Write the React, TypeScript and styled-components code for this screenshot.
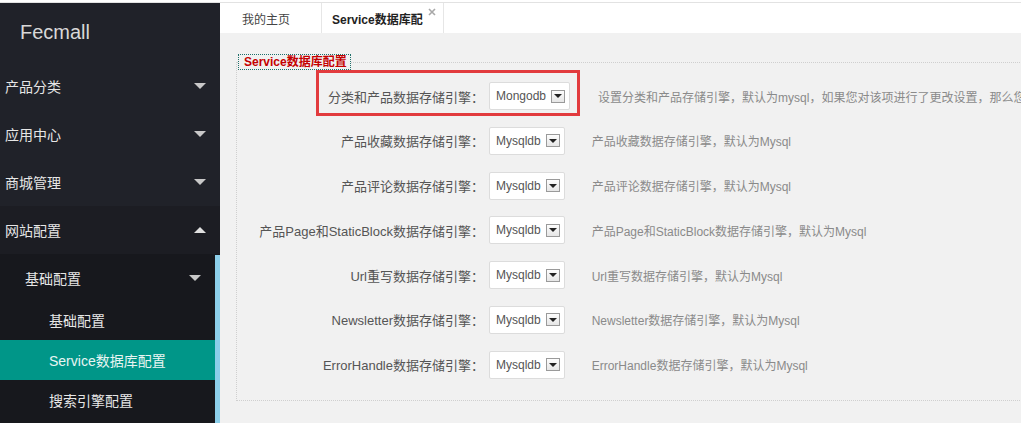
import React from "react";
import styled, { createGlobalStyle } from "styled-components";

const Global = createGlobalStyle`
  html, body { margin: 0; padding: 0; background: #fff; }
  body { font-family: "Liberation Sans", "Noto Sans CJK SC", sans-serif; overflow: hidden; }
  * { box-sizing: border-box; }
`;

const Page = styled.div`
  width: 1021px;
  height: 423px;
  padding-top: 2px;
  overflow: hidden;
`;

const Frame = styled.div`
  display: flex;
  height: 421px;
  border-top: 1px solid #e2e2e2;
`;

const Sidebar = styled.aside`
  position: relative;
  width: 220px;
  flex: none;
  background: #202229;
  display: flex;
  flex-direction: column;
`;

const Logo = styled.div`
  height: 59px;
  padding-left: 20px;
  display: flex;
  align-items: center;
  font-size: 20px;
  color: #d8d8d8;
`;

const NavItem = styled.div<{ $bg?: string }>`
  height: 48px;
  display: flex;
  align-items: center;
  justify-content: space-between;
  padding: 0 14px 0 5px;
  font-size: 14px;
  color: #e6e6e6;
  background: ${(p) => p.$bg || "transparent"};
`;

const SubArea = styled.div`
  flex: 1;
  background: #17181d;
  padding-right: 5px;
`;

const SubHeader = styled.div`
  height: 46px;
  display: flex;
  align-items: center;
  justify-content: space-between;
  padding: 2px 14px 0 25px;
  font-size: 14px;
  color: #e6e6e6;
`;

const SubItem = styled.div<{ $active?: boolean }>`
  height: 40px;
  display: flex;
  align-items: center;
  padding-left: 49px;
  font-size: 14px;
  color: ${(p) => (p.$active ? "#e8f5f3" : "#e6e6e6")};
  background: ${(p) => (p.$active ? "#009688" : "transparent")};
`;

const Caret = styled.span<{ $up?: boolean }>`
  width: 0;
  height: 0;
  border-left: 6px solid transparent;
  border-right: 6px solid transparent;
  ${(p) =>
    p.$up
      ? "border-bottom: 6px solid #e0e0e0;"
      : "border-top: 6px solid #c8c8c8;"}
`;

const ScrollThumb = styled.div`
  position: absolute;
  right: 0;
  top: 252px;
  bottom: 0;
  width: 5px;
  background: #8ccfea;
`;

const Main = styled.main`
  flex: 1;
  min-width: 0;
  display: flex;
  flex-direction: column;
  background: #f1f1f1;
  overflow: hidden;
`;

const TabBar = styled.div`
  height: 30px;
  flex: none;
  display: flex;
  background: #fff;
`;

const Tab = styled.div<{ $active?: boolean; $w: number; $pl: number }>`
  position: relative;
  width: ${(p) => p.$w}px;
  padding-left: ${(p) => p.$pl}px;
  display: flex;
  align-items: center;
  font-size: 12px;
  color: ${(p) => (p.$active ? "#222" : "#444")};
  font-weight: ${(p) => (p.$active ? 600 : 400)};
  border-right: 1px solid #e6e6e6;
`;

const Close = styled.svg`
  position: absolute;
  right: 7px;
  top: 5px;
`;

const Content = styled.div`
  flex: 1;
  padding: 21px 0 0 16px;
`;

const FieldSet = styled.fieldset`
  width: 1000px;
  margin: 0;
  padding: 12px 0 4px 0;
  border: 1px dotted #cfcfcf;
  border-right: none;
`;

const Legend = styled.legend`
  margin-left: 1px;
  padding: 0 3px 0 5px;
  font-size: 12px;
  font-weight: bold;
  color: #c40000;
  border: 1px dotted #1f6f6a;
  line-height: 14px;
`;

const Row = styled.div`
  position: relative;
  display: flex;
  align-items: center;
  height: 28px;
  margin-bottom: 16.8px;
`;

const Label = styled.label`
  width: 247px;
  flex: none;
  text-align: right;
  font-size: 13px;
  color: #555;
  white-space: nowrap;
`;

const SelectBox = styled.div`
  margin-left: 5px;
  height: 28px;
  display: flex;
  align-items: center;
  gap: 5px;
  padding: 0 4px 0 6px;
  background: #fff;
  border: 1px solid #dcdcdc;
  border-radius: 2px;
  font-size: 12px;
  color: #555;
`;

const ArrowBtn = styled.span`
  width: 14px;
  height: 13px;
  border: 1px solid #9a9a9a;
  background: linear-gradient(#fdfdfd, #e6e6e6);
  display: flex;
  align-items: center;
  justify-content: center;
  &::after {
    content: "";
    border-left: 4px solid transparent;
    border-right: 4px solid transparent;
    border-top: 4px solid #222;
  }
`;

const Desc = styled.span<{ $ml: number }>`
  margin-left: ${(p) => p.$ml}px;
  font-size: 12px;
  color: #8a8a8a;
  white-space: nowrap;
`;

const Highlight = styled.div`
  position: absolute;
  left: 79px;
  top: -12px;
  width: 264px;
  height: 46px;
  border: 3px solid #e23b3e;
  pointer-events: none;
`;

const rows = [
  { label: "分类和产品数据存储引擎：", value: "Mongodb", desc: "设置分类和产品存储引擎，默认为mysql，如果您对该项进行了更改设置，那么您需要重新导入数据", hl: true },
  { label: "产品收藏数据存储引擎：", value: "Mysqldb", desc: "产品收藏数据存储引擎，默认为Mysql" },
  { label: "产品评论数据存储引擎：", value: "Mysqldb", desc: "产品评论数据存储引擎，默认为Mysql" },
  { label: "产品Page和StaticBlock数据存储引擎：", value: "Mysqldb", desc: "产品Page和StaticBlock数据存储引擎，默认为Mysql" },
  { label: "Url重写数据存储引擎：", value: "Mysqldb", desc: "Url重写数据存储引擎，默认为Mysql" },
  { label: "Newsletter数据存储引擎：", value: "Mysqldb", desc: "Newsletter数据存储引擎，默认为Mysql" },
  { label: "ErrorHandle数据存储引擎：", value: "Mysqldb", desc: "ErrorHandle数据存储引擎，默认为Mysql" },
];

export default function App() {
  return (
    <Page>
      <Global />
      <Frame>
        <Sidebar>
          <Logo>Fecmall</Logo>
          <NavItem>产品分类<Caret /></NavItem>
          <NavItem>应用中心<Caret /></NavItem>
          <NavItem>商城管理<Caret /></NavItem>
          <NavItem $bg="#1c1d23">网站配置<Caret $up /></NavItem>
          <SubArea>
            <SubHeader>基础配置<Caret /></SubHeader>
            <SubItem>基础配置</SubItem>
            <SubItem $active>Service数据库配置</SubItem>
            <SubItem>搜索引擎配置</SubItem>
          </SubArea>
          <ScrollThumb />
        </Sidebar>
        <Main>
          <TabBar>
            <Tab $w={102} $pl={22}>我的主页</Tab>
            <Tab $w={122} $pl={10} $active>
              Service数据库配
              <Close width="8" height="8" viewBox="0 0 8 8">
                <path d="M1 1L7 7M7 1L1 7" stroke="#a8a8a8" strokeWidth="1.6" />
              </Close>
            </Tab>
          </TabBar>
          <Content>
            <FieldSet>
              <Legend>Service数据库配置</Legend>
              {rows.map((r) => (
                <Row key={r.label}>
                  <Label>{r.label}</Label>
                  <SelectBox>
                    {r.value}
                    <ArrowBtn />
                  </SelectBox>
                  <Desc $ml={r.hl ? 28 : 27}>{r.desc}</Desc>
                  {r.hl && <Highlight />}
                </Row>
              ))}
            </FieldSet>
          </Content>
        </Main>
      </Frame>
    </Page>
  );
}
